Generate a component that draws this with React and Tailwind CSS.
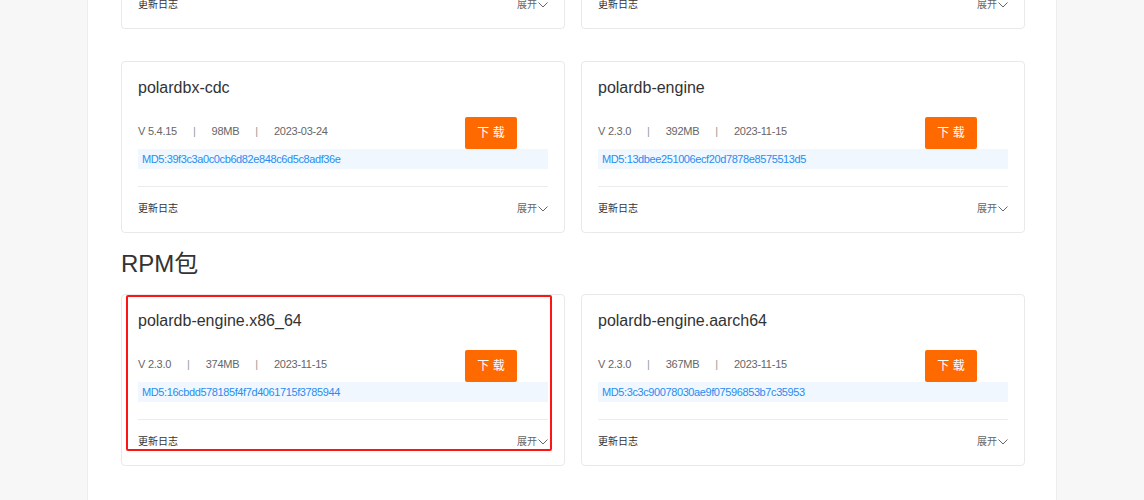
const rowOne = [
  { name: "polardbx-sql", version: "V 5.4.15", size: "212MB", date: "2023-03-24", md5: "a7e1c2f0b39d4c8e5f6a10b2c3d4e5f6" },
  { name: "polardbx-engine", version: "V 5.4.15", size: "186MB", date: "2023-03-24", md5: "5b2c9e7a0d1f4e3c8b6a2d9f0e1c7b4a" },
];

const rowTwo = [
  { name: "polardbx-cdc", version: "V 5.4.15", size: "98MB", date: "2023-03-24", md5: "39f3c3a0c0cb6d82e848c6d5c8adf36e" },
  { name: "polardb-engine", version: "V 2.3.0", size: "392MB", date: "2023-11-15", md5: "13dbee251006ecf20d7878e8575513d5" },
];

const rpm = [
  { name: "polardb-engine.x86_64", version: "V 2.3.0", size: "374MB", date: "2023-11-15", md5: "16cbdd578185f4f7d4061715f3785944", marked: true },
  { name: "polardb-engine.aarch64", version: "V 2.3.0", size: "367MB", date: "2023-11-15", md5: "3c3c90078030ae9f07596853b7c35953" },
];

const Chevron = () => (
  <svg width="10" height="6" viewBox="0 0 10 6" className="ml-[1px]">
    <polyline points="0.5,0.5 5,5 9.5,0.5" fill="none" stroke="#666" strokeWidth="1" />
  </svg>
);

const Card = ({ item }) => {
  return (
    <div className="relative flex flex-col h-[172px] bg-white border border-[#e9e9e9] rounded-[4px] px-[16px] pt-[14px]">
      <h3 className="text-[16px] leading-[24px] text-[#333]">{item.name}</h3>

      <div className="flex items-center mt-[17px] h-[32px]">
        <div className="flex-1 flex items-center gap-[16px] pb-[3px] text-[11px] text-[#666] tracking-[-0.25px]">
          <span>{item.version}</span>
          <span className="text-[#999]">|</span>
          <span>{item.size}</span>
          <span className="text-[#999]">|</span>
          <span>{item.date}</span>
        </div>
        <button className="w-[52px] h-[32px] mr-[31px] bg-[#ff6a00] rounded-[2px] text-white text-[12px]">
          下 载
        </button>
      </div>

      <div className="h-[20px] flex items-center px-[4px] bg-[#f0f7ff] text-[11px] text-[#2a8cf0] tracking-[-0.4px]">
        MD5:{item.md5}
      </div>

      <div className="mt-[17px] border-t border-[#ececec] h-[44px] flex items-center justify-between text-[10px]">
        <span className="text-[#333]">更新日志</span>
        <span className="flex items-center text-[#666]">
          展开
          <Chevron />
        </span>
      </div>

      {item.marked && (
        <div className="absolute left-[4px] top-0 w-[426px] h-[156px] border-[2px] border-[#ff1414] rounded-[2px]" />
      )}
    </div>
  );
};

const App = () => {
  return (
    <div className="h-[500px] overflow-hidden bg-[#f7f7f7] font-['Liberation_Sans','Noto_Sans_CJK_SC',sans-serif]">
      <section className="flex flex-col w-[970px] h-[500px] mx-auto bg-white border-x border-[#ededed] pl-[33px] pr-[31px]">
        <div className="grid grid-cols-2 gap-x-[16px] gap-y-[32px] mt-[-143px]">
          {rowOne.map((item) => (
            <Card key={item.name} item={item} />
          ))}
          {rowTwo.map((item) => (
            <Card key={item.name} item={item} />
          ))}
        </div>

        <h2 className="mt-[15px] mb-[14px] text-[24px] leading-[32px] text-[#333]">RPM包</h2>

        <div className="grid grid-cols-2 gap-x-[16px]">
          {rpm.map((item) => (
            <Card key={item.name} item={item} />
          ))}
        </div>
      </section>
    </div>
  );
};

export default App;
